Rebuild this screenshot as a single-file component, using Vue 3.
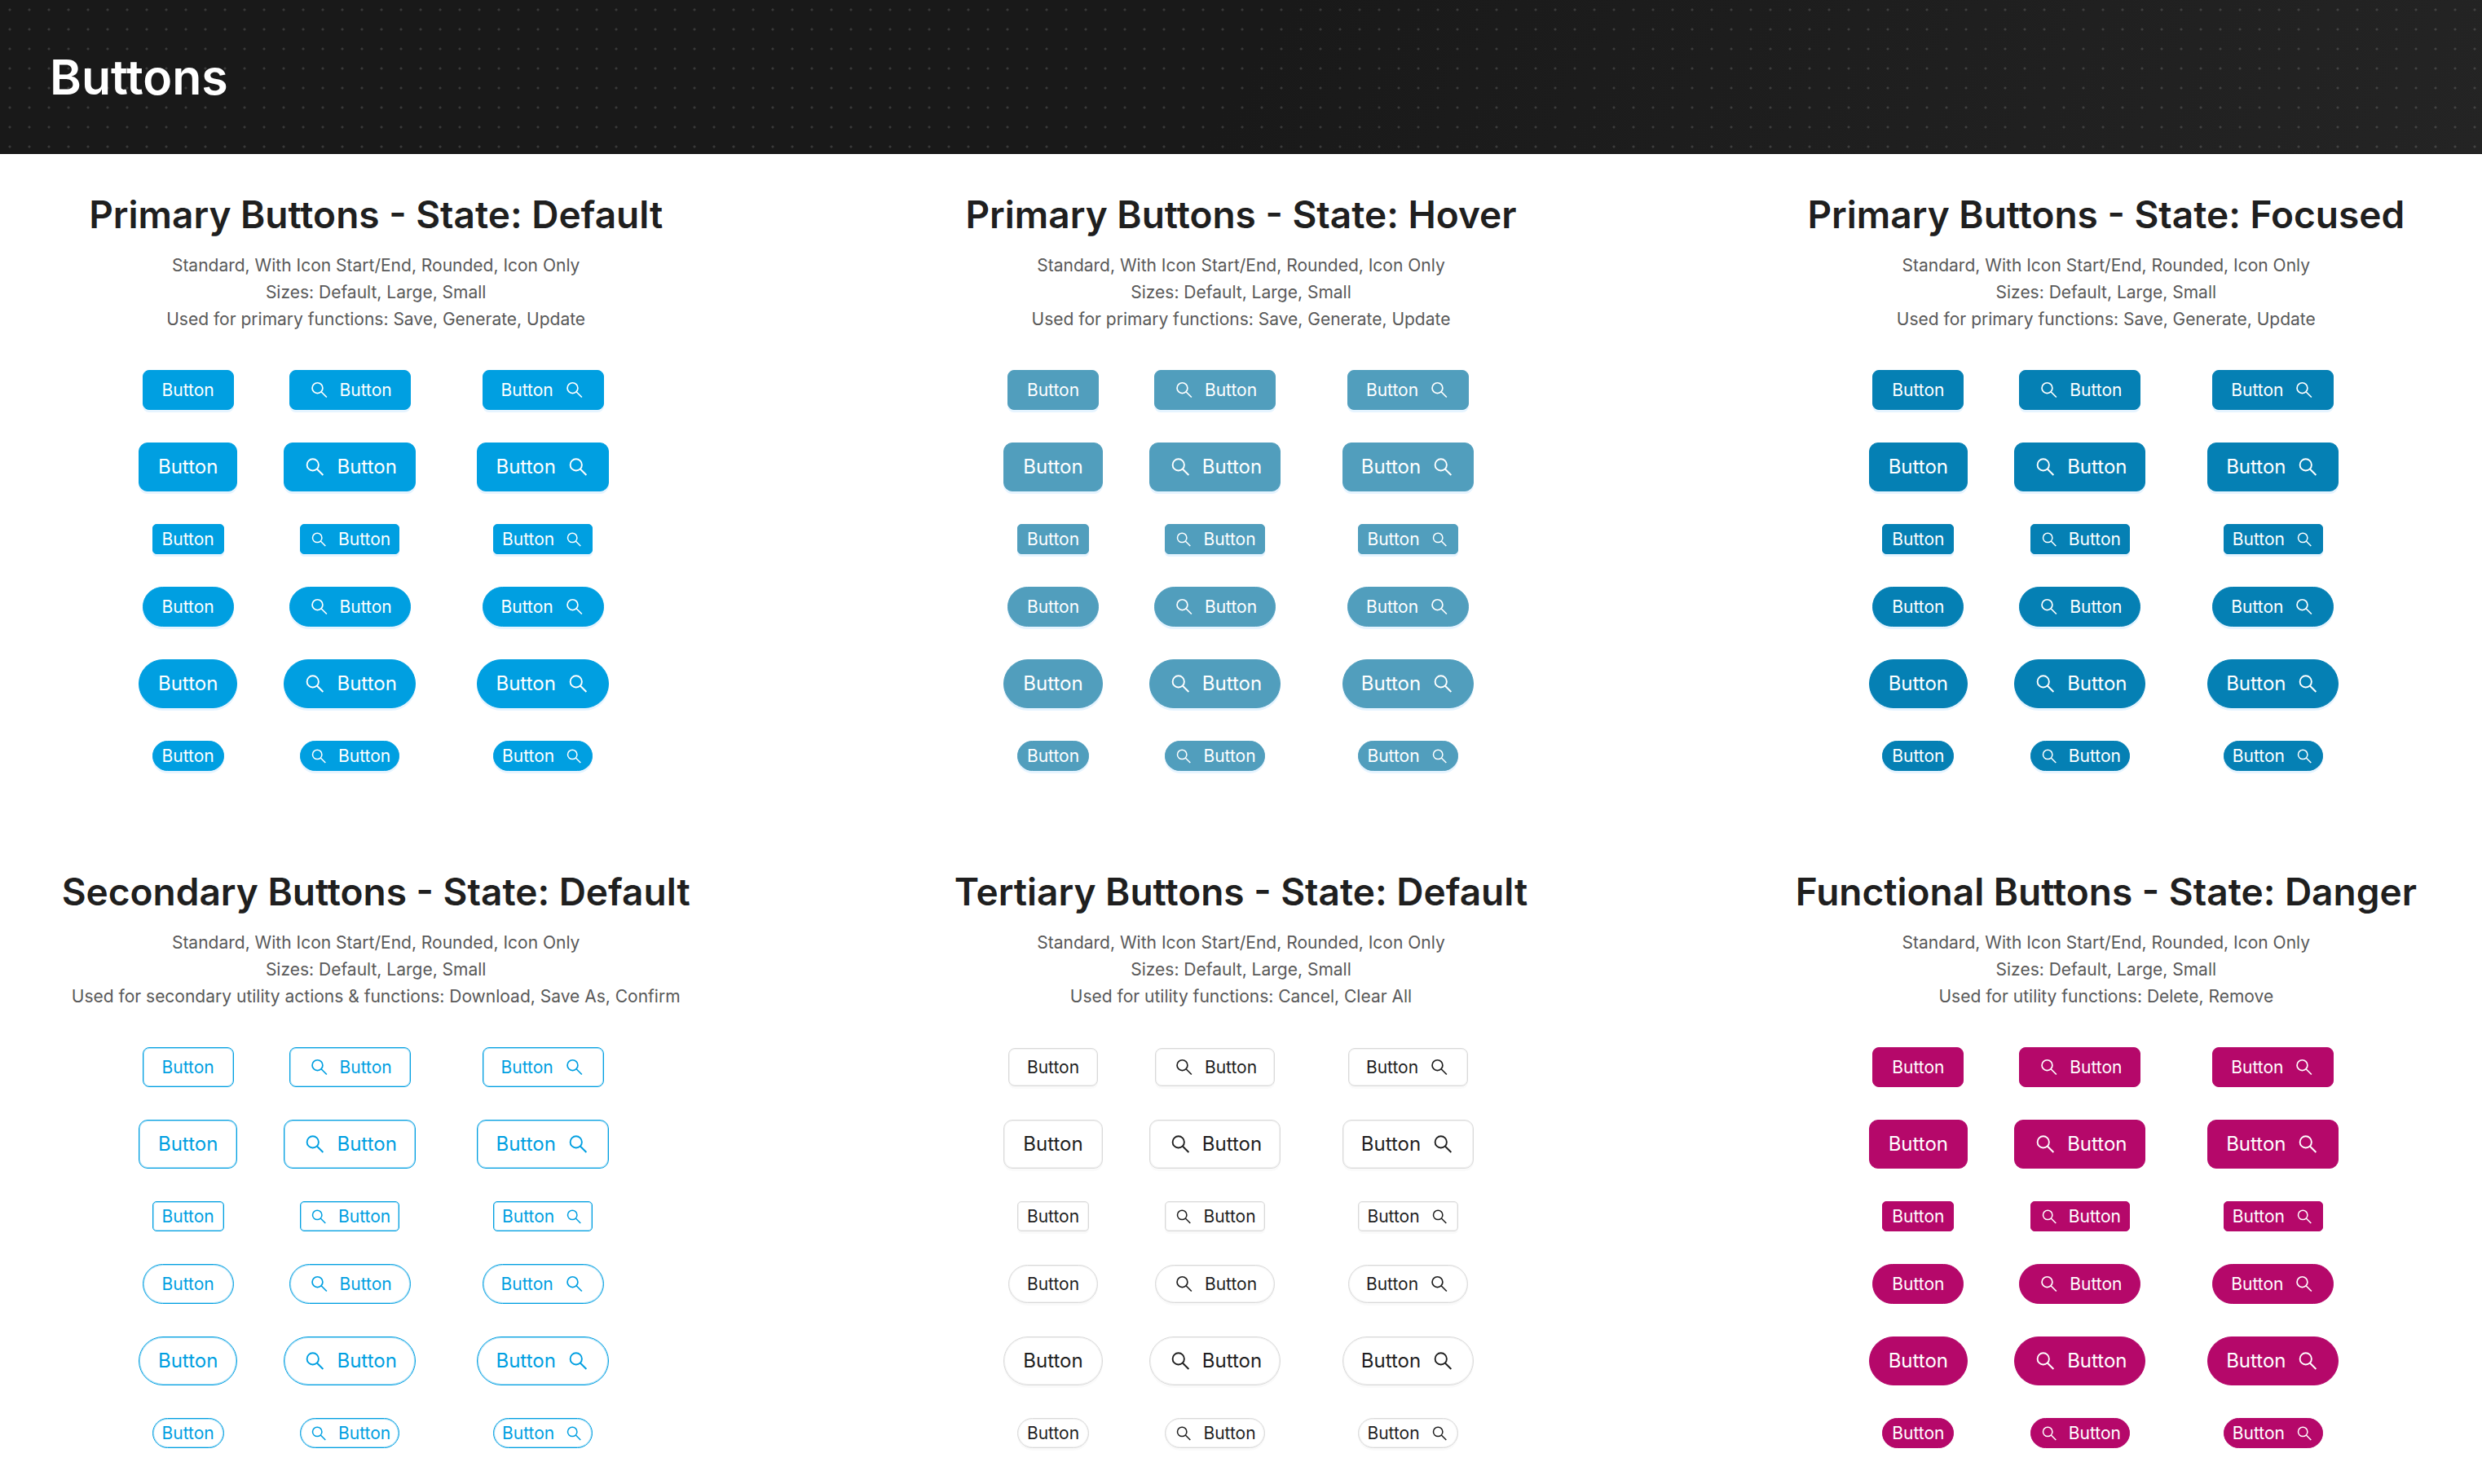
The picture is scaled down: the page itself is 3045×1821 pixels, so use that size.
<script setup>
const common = ['Standard, With Icon Start/End, Rounded, Icon Only', 'Sizes: Default, Large, Small']

const sections = [
  { variant: 'primary', title: 'Primary Buttons - State: Default', usage: 'Used for primary functions: Save, Generate, Update' },
  { variant: 'hovered', title: 'Primary Buttons - State: Hover', usage: 'Used for primary functions: Save, Generate, Update' },
  { variant: 'focused', title: 'Primary Buttons - State: Focused', usage: 'Used for primary functions: Save, Generate, Update' },
  { variant: 'secondary', title: 'Secondary Buttons - State: Default', usage: 'Used for secondary utility actions & functions: Download, Save As, Confirm' },
  { variant: 'tertiary', title: 'Tertiary Buttons - State: Default', usage: 'Used for utility functions: Cancel, Clear All' },
  { variant: 'danger', title: 'Functional Buttons - State: Danger', usage: 'Used for utility functions: Delete, Remove' },
]

const rows = [
  { size: 'medium', rounded: false },
  { size: 'large', rounded: false },
  { size: 'small', rounded: false },
  { size: 'medium', rounded: true },
  { size: 'large', rounded: true },
  { size: 'small', rounded: true },
]

const placements = ['none', 'start', 'end']
</script>

<template>
  <header class="banner">
    <h1>Buttons</h1>
  </header>
  <main class="sections">
    <section v-for="section in sections" :key="section.variant" class="section">
      <h2>{{ section.title }}</h2>
      <p class="description">
        <span v-for="line in [...common, section.usage]" :key="line">{{ line }}</span>
      </p>
      <div class="samples">
        <div v-for="(row, index) in rows" :key="index" class="row" :class="row.size">
          <button
            v-for="placement in placements"
            :key="placement"
            type="button"
            class="btn"
            :class="[section.variant, row.size, placement, { rounded: row.rounded }]"
          >
            <svg v-if="placement !== 'none'" class="icon" viewBox="0 0 24 24" aria-hidden="true">
              <circle cx="10.2" cy="9.9" r="5.7" />
              <path d="M14.3 14 20.3 20" />
            </svg>
            <span>Button</span>
          </button>
        </div>
      </div>
    </section>
  </main>
</template>

<style>
body {
  margin: 0;
  background: #fff;
  font-family: Inter, sans-serif;
}
</style>

<style scoped>
.banner {
  display: flex;
  align-items: center;
  box-sizing: border-box;
  height: 189px;
  padding: 2px 61px 0;
  border-bottom: 1px solid #141414;
  background:
    radial-gradient(circle at 12px 12px, rgba(255, 255, 255, 0.14) 1px, transparent 2px) 0 0 / 24px 24px,
    linear-gradient(120deg, #191919 50%, #242424);
}

h1 {
  margin: 0;
  color: #fff;
  font-size: 59px;
  font-weight: 600;
  line-height: 64px;
}

.sections {
  display: grid;
  grid-template-columns: repeat(3, minmax(0, 1fr));
  gap: 116px 267px;
  padding: 42px 64px;
}

.section {
  display: flex;
  flex-direction: column;
  align-items: center;
}

h2 {
  margin: 0;
  color: #1f1f1f;
  font-size: 46px;
  font-weight: 600;
  line-height: 64px;
  white-space: nowrap;
}

.description {
  display: flex;
  flex-direction: column;
  margin: 14px 0 0;
  color: #595959;
  font-size: 21px;
  line-height: 33px;
  text-align: center;
  white-space: nowrap;
}

.samples {
  display: flex;
  flex-direction: column;
  gap: 40px;
  margin-top: 46px;
  padding-right: 6px;
}

.row {
  display: grid;
  grid-template-columns: 123px 162px 181px;
  column-gap: 56px;
  align-items: center;
  justify-items: center;
}

.row.medium {
  height: 49px;
}

.row.large {
  height: 60px;
}

.row.small {
  height: 37px;
}

.btn {
  display: flex;
  align-items: center;
  justify-content: center;
  gap: 12px;
  box-sizing: border-box;
  height: 100%;
  padding: 0 22px;
  border: 1px solid transparent;
  border-radius: 8px;
  font: inherit;
  font-size: 21px;
  line-height: 28px;
  white-space: nowrap;
}

.btn.none {
  padding: 0 23px;
}

.btn.end {
  flex-direction: row-reverse;
  margin-left: 19px;
}

.icon {
  flex: none;
  width: 27px;
  height: 27px;
  fill: none;
  stroke: currentColor;
  stroke-width: 1.5;
}

.btn.large {
  border-radius: 11px;
  font-size: 24px;
}

.large .icon {
  width: 30px;
  height: 30px;
}

.btn.small {
  padding: 0 10px;
  border-radius: 5px;
}

.btn.small.none {
  padding: 0 11px;
}

.small .icon {
  width: 24px;
  height: 24px;
}

.btn.rounded {
  border-radius: 30px;
}

.primary,
.hovered,
.focused {
  color: #fff;
  box-shadow: 0 3px 0 #e6f4ff;
}

.primary {
  border-color: #009fe1;
  background: #009fe1;
}

.hovered {
  border-color: #519ebd;
  background: #519ebd;
}

.focused {
  border-color: #0580b4;
  background: #0580b4;
}

.secondary {
  border-color: #009fe1;
  background: #fff;
  color: #009fe1;
  box-shadow: inset 0 0 0 1px rgba(0, 159, 225, 0.35);
}

.tertiary {
  border-color: #d9d9d9;
  background: #fff;
  color: #1f1f1f;
  box-shadow:
    inset 0 0 0 1px rgba(0, 0, 0, 0.05),
    0 3px 0 rgba(0, 0, 0, 0.02);
}

.tertiary.medium {
  height: 47px;
  padding: 0 21px;
}

.tertiary.medium.none {
  padding: 0 22px;
}

.danger {
  border-color: #b5086a;
  background: #b5086a;
  color: #fff;
}
</style>
